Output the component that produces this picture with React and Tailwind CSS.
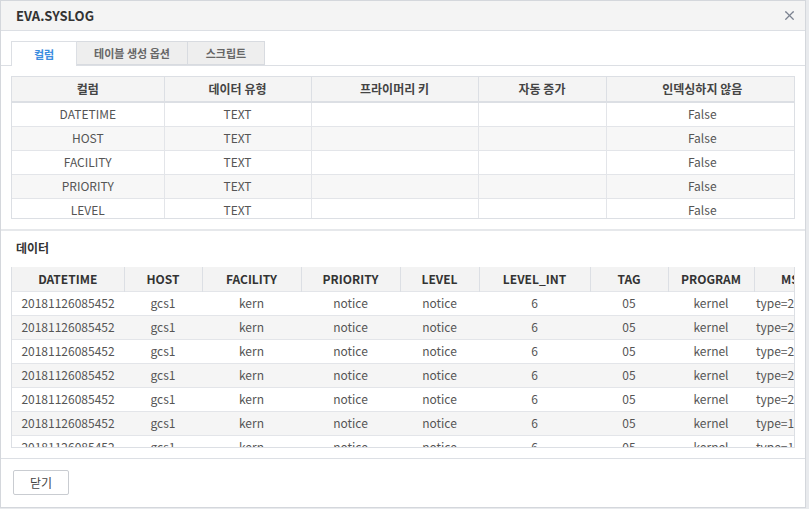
import { X } from 'lucide-react';

const columnRows = ['DATETIME', 'HOST', 'FACILITY', 'PRIORITY', 'LEVEL'];
const columnHead = [
  { label: '컬럼', w: 152 },
  { label: '데이터 유형', w: 147 },
  { label: '프라이머리 키', w: 167 },
  { label: '자동 증가', w: 128 },
  { label: '인덱싱하지 않음', w: 192 },
];

const dataHead = [
  { label: 'DATETIME', w: 112 },
  { label: 'HOST', w: 78 },
  { label: 'FACILITY', w: 99 },
  { label: 'PRIORITY', w: 99 },
  { label: 'LEVEL', w: 79 },
  { label: 'LEVEL_INT', w: 111 },
  { label: 'TAG', w: 78 },
  { label: 'PROGRAM', w: 86 },
  { label: 'MSG', w: 80 },
];

const msgs = ['type=2400 msg=audit', 'type=2400 msg=audit', 'type=2400 msg=audit', 'type=2400 msg=audit', 'type=2400 msg=audit', 'type=1100 msg=audit', 'type=1100 msg=audit'];

export default function App() {
  return (
    <div className="h-[509px] w-[809px] bg-[#e8eaed]" style={{ fontFamily: '"Noto Sans CJK KR", "Noto Sans", sans-serif' }}>
      <div className="flex h-[508px] w-[806px] flex-col border border-[#d4d7dc] bg-white text-[12px] text-[#555]">
        <div className="flex h-[30px] shrink-0 items-center justify-between border-b border-[#dcdfe4] bg-[#f4f4f4] pl-[15px] pr-[8px]">
          <p className="text-[13px] font-bold text-[#333]">EVA.SYSLOG</p>
          <X size={15} strokeWidth={2} className="text-[#7b8290]" />
        </div>

        <div className="pt-[10px]">
          <div className="flex h-[25px] border-b border-[#dcdfe4] pl-[10px]">
            <div className="-mb-px flex w-[66px] items-center justify-center border border-b-0 border-[#dcdfe4] bg-white text-[11px] font-bold text-[#3b8de0]">컬럼</div>
            <div className="flex w-[111px] items-center justify-center border-y border-r border-[#d8dbe0] bg-[#eeeeee] text-[11px] font-semibold text-[#666]">테이블 생성 옵션</div>
            <div className="flex w-[77px] items-center justify-center border-y border-r border-[#d8dbe0] bg-[#eeeeee] text-[11px] font-semibold text-[#666]">스크립트</div>
          </div>
        </div>

        <div className="px-[10px] pb-[10px] pt-[10px]">
          <div className="h-[143px] overflow-hidden border border-[#dcdfe4]">
            <table className="w-[786px] table-fixed border-collapse">
              <thead>
                <tr className="h-[25px] bg-[#f4f4f4]">
                  {columnHead.map((c, i) => (
                    <th key={c.label} style={{ width: c.w }} className={`border-b-2 border-[#dcdfe4] font-bold text-[#444] ${i > 0 ? 'border-l' : ''}`}>
                      {c.label}
                    </th>
                  ))}
                </tr>
              </thead>
              <tbody>
                {columnRows.map((r, i) => (
                  <tr key={r} className={`h-[24px] ${i % 2 === 1 ? 'bg-[#f7f7f7]' : 'bg-white'}`}>
                    <td className="border-b border-[#e3e5e9] text-center">{r}</td>
                    <td className="border-b border-l border-[#e3e5e9] text-center">TEXT</td>
                    <td className="border-b border-l border-[#e3e5e9]" />
                    <td className="border-b border-l border-[#e3e5e9]" />
                    <td className="border-b border-l border-[#e3e5e9] text-center">False</td>
                  </tr>
                ))}
              </tbody>
            </table>
          </div>
        </div>

        <div className="h-[2px] bg-[#e6e8eb]" />

        <div className="px-[10px]">
          <p className="pb-[9px] pl-[5px] pt-[7px] text-[12px] font-bold leading-[20px] text-[#333]">데이터</p>
          <div className="h-[181px] overflow-hidden border-b border-l border-r border-[#dcdfe4]">
            <table className="w-[822px] table-fixed border-collapse">
              <thead>
                <tr className="h-[24px] bg-[#f3f3f3]">
                  {dataHead.map((c, i) => (
                    <th key={c.label} style={{ width: c.w }} className={`font-bold text-[#333] ${i > 0 ? 'border-l border-[#dcdfe4]' : ''}`}>
                      {c.label}
                    </th>
                  ))}
                </tr>
              </thead>
              <tbody>
                {msgs.map((m, i) => (
                  <tr key={i} className={`h-[24px] border-t border-[#e3e5e9] text-center ${i % 2 === 1 ? 'bg-[#f5f5f5]' : 'bg-white'}`}>
                    <td>20181126085452</td>
                    <td>gcs1</td>
                    <td>kern</td>
                    <td>notice</td>
                    <td>notice</td>
                    <td>6</td>
                    <td>05</td>
                    <td>kernel</td>
                    <td className="overflow-hidden whitespace-nowrap pl-[2px] text-left">{m}</td>
                  </tr>
                ))}
              </tbody>
            </table>
          </div>
        </div>

        <div className="mt-[10px] border-t border-[#dcdfe4] px-[12px] pt-[11px]">
          <button type="button" className="h-[25px] w-[56px] rounded-[2px] border border-[#c9ccd1] bg-white text-[12px] text-[#444]">
            닫기
          </button>
        </div>
      </div>
    </div>
  );
}
